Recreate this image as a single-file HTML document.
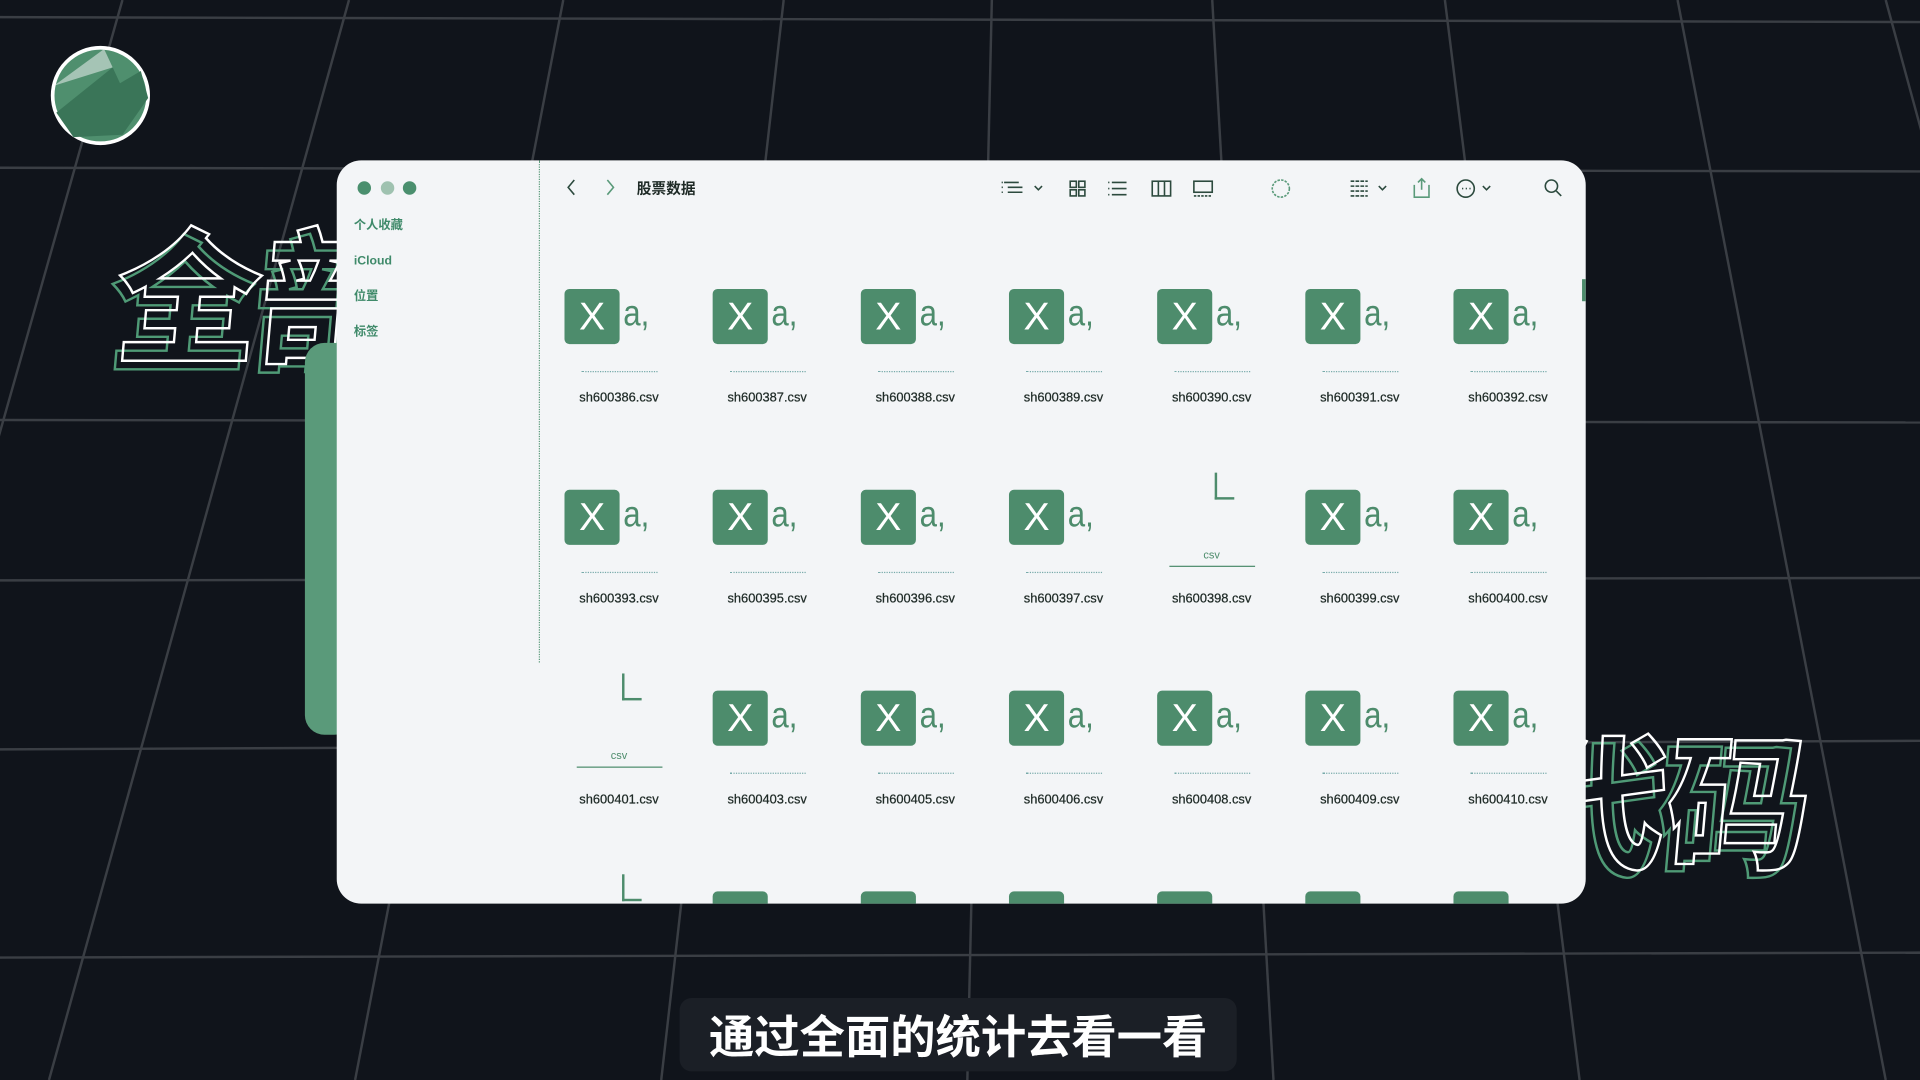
<!DOCTYPE html>
<html><head><meta charset="utf-8"><style>
*{margin:0;padding:0;box-sizing:border-box}
body{width:1920px;height:1080px;overflow:hidden;background:#10141b;font-family:"Liberation Sans","Noto Sans CJK SC",sans-serif}
#s{position:absolute;left:0;top:0;width:1568px;height:882px;transform:scale(1.22449);transform-origin:0 0}
.abs{position:absolute}
.big{position:absolute;font-family:"Noto Sans CJK SC",sans-serif;font-weight:900;color:transparent;-webkit-text-stroke:2px #fff;font-size:118px;line-height:1;transform:skewX(-5deg)}
.big2{-webkit-text-stroke:2px #4f9a76}
.win{left:275px;top:131px;width:1020px;height:607px;background:#f3f5f7;border-radius:20px;overflow:hidden}
.side{position:absolute;left:14px;font-size:10px;line-height:12px;color:#3f8a6a;font-weight:bold}
.dot{position:absolute;width:11px;height:11px;border-radius:50%;background:#4a8f6e}
.cell{position:absolute;width:121px}
.xi{position:absolute;width:45px;height:45px;background:#4d8c6c;border-radius:4px;color:#fff;font-size:32px;text-align:center;line-height:45px}
.ai{position:absolute;font-size:30px;color:#4d8c6c;line-height:45px;transform:scaleX(.85);transform-origin:0 0}
.lab{position:absolute;left:0;width:121px;text-align:center;font-size:10.5px;color:#1e2a26;-webkit-text-stroke:.2px #1e2a26}
.dl{position:absolute;height:0;border-top:1px dotted #7aa;}
</style></head><body><div id="s">
<svg class="abs" style="left:0;top:0" width="1568" height="882" viewBox="0 0 1568 882">
<g stroke="#3a3e44" stroke-width="2" fill="none">
<line x1="0" y1="14" x2="1568" y2="18"/>
<line x1="0" y1="137" x2="1568" y2="140"/>
<line x1="0" y1="343" x2="1568" y2="345"/>
<line x1="0" y1="474" x2="1568" y2="472"/>
<line x1="0" y1="612" x2="1568" y2="605"/>
<line x1="0" y1="782" x2="1568" y2="778"/>
<line x1="100" y1="0" x2="-150" y2="882"/>
<line x1="285" y1="0" x2="40" y2="882"/>
<line x1="460" y1="0" x2="290" y2="882"/>
<line x1="640" y1="0" x2="540" y2="882"/>
<line x1="810" y1="0" x2="790" y2="882"/>
<line x1="990" y1="0" x2="1040" y2="882"/>
<line x1="1180" y1="0" x2="1290" y2="882"/>
<line x1="1370" y1="0" x2="1540" y2="882"/>
<line x1="1540" y1="0" x2="1780" y2="882"/>
</g>
<circle cx="82" cy="78" r="39" fill="#4f8f6e" stroke="#fff" stroke-width="3"/>
<path d="M46 92 L92 55 L98 68 L115 58 L121 80 L100 110 L60 112Z" fill="#3a7558"/>
<path d="M44 70 L85 40 L92 55 Z" fill="#dfe8e4" opacity=".6"/>
</svg>
<div class="big big2" style="left:90px;top:183px">全部</div>
<div class="big" style="left:96px;top:176px">全部</div>
<div class="big big2" style="left:1236px;top:596px">代码</div>
<div class="big" style="left:1244px;top:590px">代码</div>
<div class="abs" style="left:249px;top:280px;width:40px;height:320px;background:#5a9a7a;border-radius:16px"></div>
<div class="abs win">
<div class="dot" style="left:17px;top:17px"></div>
<div class="dot" style="left:36px;top:17px;background:#9fc2b0"></div>
<div class="dot" style="left:54px;top:17px"></div>
<div class="side" style="top:48px">个人收藏</div>
<div class="side" style="top:77px">iCloud</div>
<div class="side" style="top:106px">位置</div>
<div class="side" style="top:135px">标签</div>
<div class="abs" style="left:165px;top:0;height:410px;border-left:1px dotted #5a9a7a"></div>
<svg class="abs" style="left:180px;top:12px" width="840" height="24" viewBox="0 0 840 24" fill="none" stroke="#2c4a3e" stroke-width="1.3">
<path d="M14 4 L9 10 L14 16"/><path d="M41 4 L46 10 L41 16" stroke="#5a9a7a"/>
<path d="M365 6h12M368 10h12M368 14h12M363 6h1M363 10h1M363 14h1"/><path d="M390 9l3 3 3-3"/>
<rect x="419" y="5" width="5" height="5"/><rect x="426" y="5" width="5" height="5"/><rect x="419" y="12" width="5" height="5"/><rect x="426" y="12" width="5" height="5"/>
<path d="M453 6h12M453 11h12M453 16h12M450 6h1M450 11h1M450 16h1"/>
<rect x="486" y="5" width="15" height="12"/><path d="M491 5v12M496 5v12"/>
<rect x="520" y="5" width="15" height="9"/><path d="M520 17h15" stroke-dasharray="2 1"/>
<circle cx="591" cy="11" r="7" stroke="#5a9a7a" stroke-dasharray="2 1"/>
<path d="M648 5h14M648 9h14M648 13h14M648 17h14" stroke-dasharray="3 1"/><path d="M671 9l3 3 3-3"/>
<path d="M700 8v10h12V8M706 3v9M703 6l3-3 3 3" stroke="#5a9a7a"/>
<circle cx="742" cy="11" r="7"/><path d="M739 11h1M742 11h1M745 11h1"/><path d="M756 9l3 3 3-3"/>
<circle cx="812" cy="9" r="5"/><path d="M816 13l4 4"/>
</svg>
<div class="abs" style="left:245px;top:14px;font-size:12px;font-weight:bold;color:#1e2a26">股票数据</div>
<div class="abs" style="left:1017px;top:97px;width:3px;height:18px;background:#4d8c6c"></div>
<div id="g"></div>
</div>
<div class="abs" style="left:555px;top:815px;width:455px;height:60px;background:#1b1f26;border-radius:10px"></div>
<div class="abs" style="left:555px;top:815px;width:455px;height:60px;line-height:58px;text-align:center;color:#fff;font-size:37px;font-weight:bold;font-family:'Noto Sans CJK SC',sans-serif;white-space:nowrap">通过全面的统计去看一看</div>
</div>
<script>
var names=[["386","387","388","389","390","391","392"],["393","395","396","397","398","399","400"],["401","403","405","406","408","409","410"],["","","","","","",""]];
var h='';
for(var r=0;r<4;r++)for(var c=0;c<7;c++){
 var L=170+c*121, T=105+r*164;
 var csv=(r==1&&c==4)||(r==2&&c==0)||(r==3&&c==0);
 h+='<div class="cell" style="left:'+L+'px;top:'+T+'px;height:120px">';
 if(csv){h+='<div style="position:absolute;left:63px;top:-14px;width:16px;height:22px;border-left:2px solid #4d8c6c;border-bottom:2px solid #4d8c6c"></div><div style="position:absolute;left:0;width:121px;top:48px;text-align:center;font-size:9px;color:#4d8c6c">csv</div><div style="position:absolute;left:26px;width:70px;top:62px;border-top:1px solid #4d8c6c"></div>';}
 else{h+='<div class="xi" style="left:16px;top:0">X</div><div class="ai" style="left:64px;top:-2px">a,</div><div class="dl" style="left:30px;width:62px;top:67px"></div>';}
 if(names[r][c])h+='<div class="lab" style="top:83px">sh600'+names[r][c]+'.csv</div>';
 h+='</div>';
}
document.getElementById('g').outerHTML=h;
</script>
</body></html>
